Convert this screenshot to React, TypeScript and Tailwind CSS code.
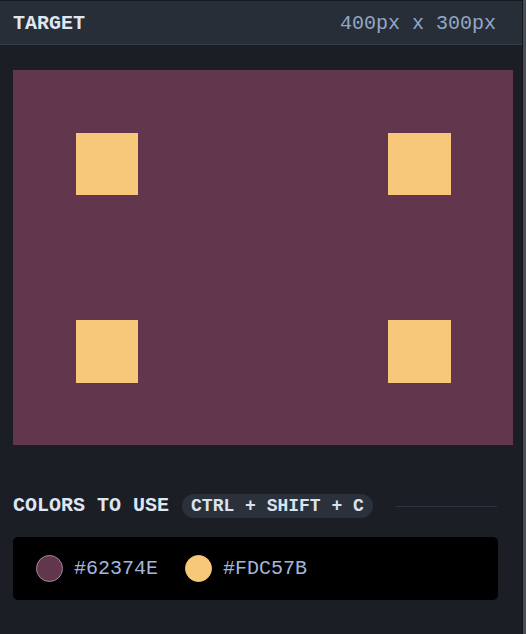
export default function App() {
  const colors = [
    { hex: '#62374E', ring: 'border-[#a8899a]', bg: 'bg-[#62374e]' },
    { hex: '#FDC57B', ring: 'border-[#f7c77a]', bg: 'bg-[#f7c77a]' },
  ];

  return (
    <div className="flex h-[634px] w-[526px] bg-[#1b1e25] font-['Liberation_Mono',monospace]">
      <div className="flex w-[523px] flex-col border-r border-[#14161b]">
        {/* Header */}
        <header className="flex h-[45px] shrink-0 items-center justify-between border-t border-b border-t-[#15181d] border-b-[#343c47] bg-[#272e37] pl-[13px] pr-[26px] pt-[2px]">
          <h2 className="text-[20px] font-bold text-[#dfe6f2]">TARGET</h2>
          <span className="text-[20px] text-[#91a6c9]">400px x 300px</span>
        </header>

        {/* Target canvas */}
        <div className="pl-[13px] pt-[25px]">
          <div className="grid h-[375px] w-[500px] grid-cols-[62.5px_62.5px] grid-rows-[62.5px_62.5px] content-between justify-between bg-[#62374e] px-[62.5px] py-[62.5px]">
            <div className="bg-[#f7c77a]" />
            <div className="bg-[#f7c77a]" />
            <div className="bg-[#f7c77a]" />
            <div className="bg-[#f7c77a]" />
          </div>
        </div>

        {/* Colors */}
        <div className="flex items-center gap-[13px] pl-[13px] pr-[25px] pt-[46px]">
          <span className="text-[20px] font-bold text-[#dfe6f2]">COLORS TO USE</span>
          <span className="rounded-full bg-[#2a313b] px-[9px] py-[1px] text-[18px] font-bold leading-[22px] text-[#dbe2ee]">
            CTRL + SHIFT + C
          </span>
          <div className="ml-[10px] h-px flex-1 bg-[#2e3540]" />
        </div>

        <div className="mx-[13px] mt-[16px] flex h-[63px] w-[485px] items-center gap-[27px] rounded-[5px] bg-black pl-[23px]">
          {colors.map((c) => (
            <div key={c.hex} className="flex items-center gap-[11px]">
              <div className={`h-[27px] w-[27px] rounded-full border ${c.ring} ${c.bg}`} />
              <span className="text-[20px] text-[#a3b6d9]">{c.hex}</span>
            </div>
          ))}
        </div>
      </div>
      <div className="w-[3px] bg-[#4a4f57]" />
    </div>
  );
}
